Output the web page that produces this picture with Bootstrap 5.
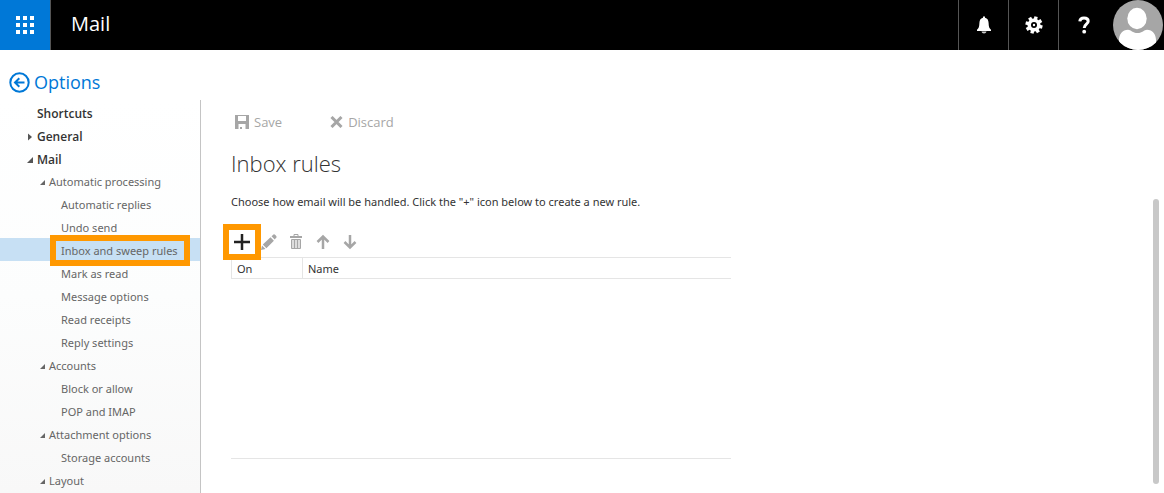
<!DOCTYPE html>
<html lang="en">
<head>
<meta charset="utf-8">
<meta name="viewport" content="width=device-width, initial-scale=1">
<title>Mail - Options</title>
<link href="https://cdn.jsdelivr.net/npm/bootstrap@5.3.0/dist/css/bootstrap.min.css" rel="stylesheet">
<style>
body { font-family: "Noto Sans", "Open Sans", sans-serif; font-size: 11px; color: #333; background: #fff; }
button, a { white-space: nowrap; }
svg { display: block; flex: none; }
.topbar { background: #000; height: 50px; }
.launcher, .launcher:hover { width: 51px; background: #0078d7; border-right: 1px solid #555; }
.app-name { font-family: "Open Sans", sans-serif; font-size: 20px; line-height: 48px; }
.top-btn, .top-btn:hover { width: 50px; border-left: 1px solid #555; }
.avatar-btn { width: 56px; padding-left: 5px; }
.options-head { height: 50px; padding: 15px 0 0 9px; }
.options-link { font-family: "Open Sans", sans-serif; font-size: 18px; line-height: 34px; color: #0078d7; gap: 4px; }
.side { width: 201px; border-right: 1px solid #c4c4c4; background: linear-gradient(#fff, #fcfdfd 50%, #f8f8f8); }
.tree-item { height: 23px; padding-top: 2px; line-height: 19px; color: #666; text-decoration: none; position: relative; }
.tree-item svg { margin-right: 4px; }
.lv-root { padding-top: 4px; padding-left: 37px; color: #333; font-family: "Open Sans", sans-serif; font-size: 12px; font-weight: 600; }
.lv-root.has-arrow { padding-left: 27px; }
.lv-group { padding-left: 39px; }
.lv-leaf { padding-left: 61px; }
.tree-item.selected { background: #c7e0f4; }
.marker::after { content: ""; position: absolute; border: 6px solid #ff9800; z-index: 1; pointer-events: none; }
.tree-item.marker::after { inset: -3px 10px -5px 50px; }
.pane { padding: 14px 0 0 30px; }
.cmd { color: #a6a6a6; font-family: "Open Sans", sans-serif; font-size: 13px; line-height: 20px; gap: 5px; }
.title { font-family: "Open Sans", sans-serif; font-size: 22px; font-weight: 300; line-height: 32px; margin: 15px 0 0; }
.hint { line-height: 18px; margin: 14px 0 0; }
.tools { padding-top: 21px; gap: 5px; }
.tool { width: 22px; height: 20px; color: #a6a6a6; position: relative; }
.tool.marker::after { inset: -8px -8px; }
.rules { width: 500px; max-width: 100%; height: 202px; margin-top: 5px; border-bottom: 1px solid #e5e5e5; }
.rules table { color: #333; }
.rules th { height: 21px; padding: 2px 5px 0; line-height: 18px; font-weight: 400; border: 1px solid #e5e5e5; border-right: 0; }
.rules th:first-child { width: 71px; }
.track { width: 11px; padding: 101px 5px 9px 0; }
.thumb { background: #c8c8c8; border-radius: 3px; }
</style>
</head>
<body class="vh-100 d-flex flex-column overflow-hidden">
<header class="topbar d-flex flex-shrink-0 text-white">
  <button class="launcher btn border-top-0 border-bottom-0 border-start-0 rounded-0 p-0 d-flex align-items-center justify-content-center" aria-label="App launcher">
    <svg width="18" height="18" fill="#fff"><path d="M0 0h4v4H0zM7 0h4v4H7zM14 0h4v4h-4zM0 7h4v4H0zM7 7h4v4H7zM14 7h4v4h-4zM0 14h4v4H0zM7 14h4v4H7zM14 14h4v4h-4z"/></svg>
  </button>
  <span class="app-name ps-3 ms-1">Mail</span>
  <div class="d-flex ms-auto">
    <button class="top-btn btn border-top-0 border-bottom-0 border-end-0 rounded-0 p-0 d-flex align-items-center justify-content-center" aria-label="Notifications">
      <svg width="16" height="18" viewBox="0 0 16 18"><path fill="#fff" d="M7 1.800V.5h2v1.300c2.600.6 3.500 2.600 3.600 5.200.1 3.500.6 5.300 2.400 6.800v1.200H1v-1.200c1.800-1.500 2.300-3.300 2.400-6.800.1-2.600 1-4.600 3.600-5.200z"/><path fill="#ccc" d="M5.500 15.500h5c-.3 1.300-1.200 2-2.500 2s-2.200-.7-2.500-2z"/></svg>
    </button>
    <button class="top-btn btn border-top-0 border-bottom-0 border-end-0 rounded-0 p-0 d-flex align-items-center justify-content-center" aria-label="Settings">
      <svg width="18" height="18" viewBox="-9 -9 18 18"><g fill="#fff" transform="rotate(14)"><path d="M-1.700-8.600h3.400v17.200h-3.400z"/><path d="M-1.700-8.600h3.400v17.200h-3.400z" transform="rotate(45)"/><path d="M-1.700-8.600h3.400v17.200h-3.400z" transform="rotate(90)"/><path d="M-1.700-8.600h3.400v17.200h-3.400z" transform="rotate(135)"/><circle r="6.500"/></g><circle r="3"/><circle r="1.200" fill="#fff"/></svg>
    </button>
    <button class="top-btn btn border-top-0 border-bottom-0 border-end-0 rounded-0 p-0 d-flex align-items-center justify-content-center" aria-label="Help">
      <svg width="12" height="18" viewBox="0 0 12 18"><path d="M1.800 5.400C2 3.100 3.500 2.100 6 2.100s4.200 1 4.200 3.100C10.200 8.200 6.200 8 6.200 12" fill="none" stroke="#fff" stroke-width="3"/><circle cx="6.200" cy="15.700" r="1.900" fill="#fff"/></svg>
    </button>
    <button class="avatar-btn btn border-0 rounded-0 py-0 pe-0" aria-label="Account">
      <svg width="50" height="50" viewBox="0 0 50 50"><defs><clipPath id="disc"><circle cx="25" cy="25" r="25"/></clipPath></defs><g clip-path="url(#disc)"><path fill="#a6a6a6" d="M0 0h50v50H0z"/><g fill="#fff"><ellipse cx="24" cy="18.500" rx="9.700" ry="10.700"/><path d="M6 50V40c0-6 3.500-10.300 9-10.300 3 0 4.500 3.300 9.500 3.300s6.500-3.300 9.500-3.300c5.500 0 9 4.300 9 10.300v10z"/></g></g></svg>
    </button>
  </div>
</header>
<div class="d-flex flex-grow-1">
  <div class="d-flex flex-column flex-shrink-0">
    <div class="options-head">
      <a href="#" class="options-link d-inline-flex align-items-center text-decoration-none">
        <svg width="21" height="21" viewBox="0 0 21 21" fill="none" stroke="#0078d7" stroke-width="2"><circle cx="10.500" cy="10.500" r="9.200"/><path d="M15.500 10.500H6M10.300 6.200L6 10.500l4.300 4.300"/></svg>
        Options
      </a>
    </div>
    <nav class="side flex-grow-1 d-flex flex-column" aria-label="Options">
      <a href="#" class="tree-item lv-root d-flex align-items-center">Shortcuts</a>
      <a href="#" class="tree-item lv-root has-arrow d-flex align-items-center"><svg width="6" height="8"><path fill="#555" d="M1 .5L5 4 1 7.500z"/></svg>General</a>
      <a href="#" class="tree-item lv-root has-arrow d-flex align-items-center"><svg width="6" height="6"><path fill="#555" d="M6 0v6H0z"/></svg>Mail</a>
      <a href="#" class="tree-item lv-group d-flex align-items-center"><svg width="6" height="6"><path fill="#666" d="M6 1v5H1z"/></svg>Automatic processing</a>
      <a href="#" class="tree-item lv-leaf d-flex align-items-center">Automatic replies</a>
      <a href="#" class="tree-item lv-leaf d-flex align-items-center">Undo send</a>
      <a href="#" class="tree-item lv-leaf selected marker d-flex align-items-center" aria-current="page">Inbox and sweep rules</a>
      <a href="#" class="tree-item lv-leaf d-flex align-items-center">Mark as read</a>
      <a href="#" class="tree-item lv-leaf d-flex align-items-center">Message options</a>
      <a href="#" class="tree-item lv-leaf d-flex align-items-center">Read receipts</a>
      <a href="#" class="tree-item lv-leaf d-flex align-items-center">Reply settings</a>
      <a href="#" class="tree-item lv-group d-flex align-items-center"><svg width="6" height="6"><path fill="#666" d="M6 1v5H1z"/></svg>Accounts</a>
      <a href="#" class="tree-item lv-leaf d-flex align-items-center">Block or allow</a>
      <a href="#" class="tree-item lv-leaf d-flex align-items-center">POP and IMAP</a>
      <a href="#" class="tree-item lv-group d-flex align-items-center"><svg width="6" height="6"><path fill="#666" d="M6 1v5H1z"/></svg>Attachment options</a>
      <a href="#" class="tree-item lv-leaf d-flex align-items-center">Storage accounts</a>
      <a href="#" class="tree-item lv-group d-flex align-items-center"><svg width="6" height="6"><path fill="#666" d="M6 1v5H1z"/></svg>Layout</a>
    </nav>
  </div>
  <main class="pane flex-grow-1 mt-5">
    <div class="d-flex gap-5 ps-1">
      <button class="cmd btn border-0 p-0 d-flex align-items-center"><svg width="14" height="14"><path fill="#a6a6a6" fill-rule="evenodd" d="M0 0h14v14H0zM3 1v5h8V1zM3.500 9v5H5v-2h2v2h3.500V9z"/></svg>Save</button>
      <button class="cmd btn border-0 p-0 d-flex align-items-center"><svg width="13" height="12"><path stroke="#a6a6a6" stroke-width="3" d="M1.500 1l10 10M11.500 1l-10 10"/></svg>Discard</button>
    </div>
    <h1 class="title">Inbox rules</h1>
    <p class="hint">Choose how email will be handled. Click the "+" icon below to create a new rule.</p>
    <div class="tools d-flex">
      <button class="tool marker btn border-0 p-0 d-flex align-items-center justify-content-center" aria-label="New rule"><svg width="16" height="16"><path stroke="#222" stroke-width="2.500" d="M8 0v16M0 8h16"/></svg></button>
      <button class="tool btn border-0 p-0 d-flex align-items-center justify-content-center" aria-label="Edit"><svg width="16" height="16" fill="#a6a6a6"><path d="M0 16l1-4.500L4.500 15zM1.800 10.500l7.700-7.200 3.400 3.400-7.500 7.500zM10.500 2.300L12.800.3c.6-.5 3.400 2.200 2.800 2.900l-1.900 2.300z"/></svg></button>
      <button class="tool btn border-0 p-0 d-flex align-items-center justify-content-center" aria-label="Delete"><svg width="12" height="16" fill="none" stroke="#a6a6a6"><path fill="#ddd" d="M1.500 5.500h9v9h-9z"/><path stroke-width="2" d="M0 3h12"/><path d="M4 2V.5h4V2M4.500 6v8M7.500 6v8"/></svg></button>
      <button class="tool btn border-0 p-0 d-flex align-items-center justify-content-center" aria-label="Move up"><svg width="14" height="16" fill="none" stroke="#a6a6a6" stroke-width="2.500"><path d="M7 15V2M1.500 8L7 2.500 12.500 8"/></svg></button>
      <button class="tool btn border-0 p-0 d-flex align-items-center justify-content-center" aria-label="Move down"><svg width="14" height="16" fill="none" stroke="#a6a6a6" stroke-width="2.500"><path d="M7 1v13M1.500 8L7 13.500 12.500 8"/></svg></button>
    </div>
    <div class="rules">
      <table class="w-100"><thead><tr><th scope="col">On</th><th scope="col">Name</th></tr></thead></table>
    </div>
  </main>
  <div class="track d-flex flex-column mt-5"><div class="thumb flex-grow-1"></div></div>
</div>
<script src="https://cdn.jsdelivr.net/npm/bootstrap@5.3.0/dist/js/bootstrap.bundle.min.js"></script>
</body>
</html>
